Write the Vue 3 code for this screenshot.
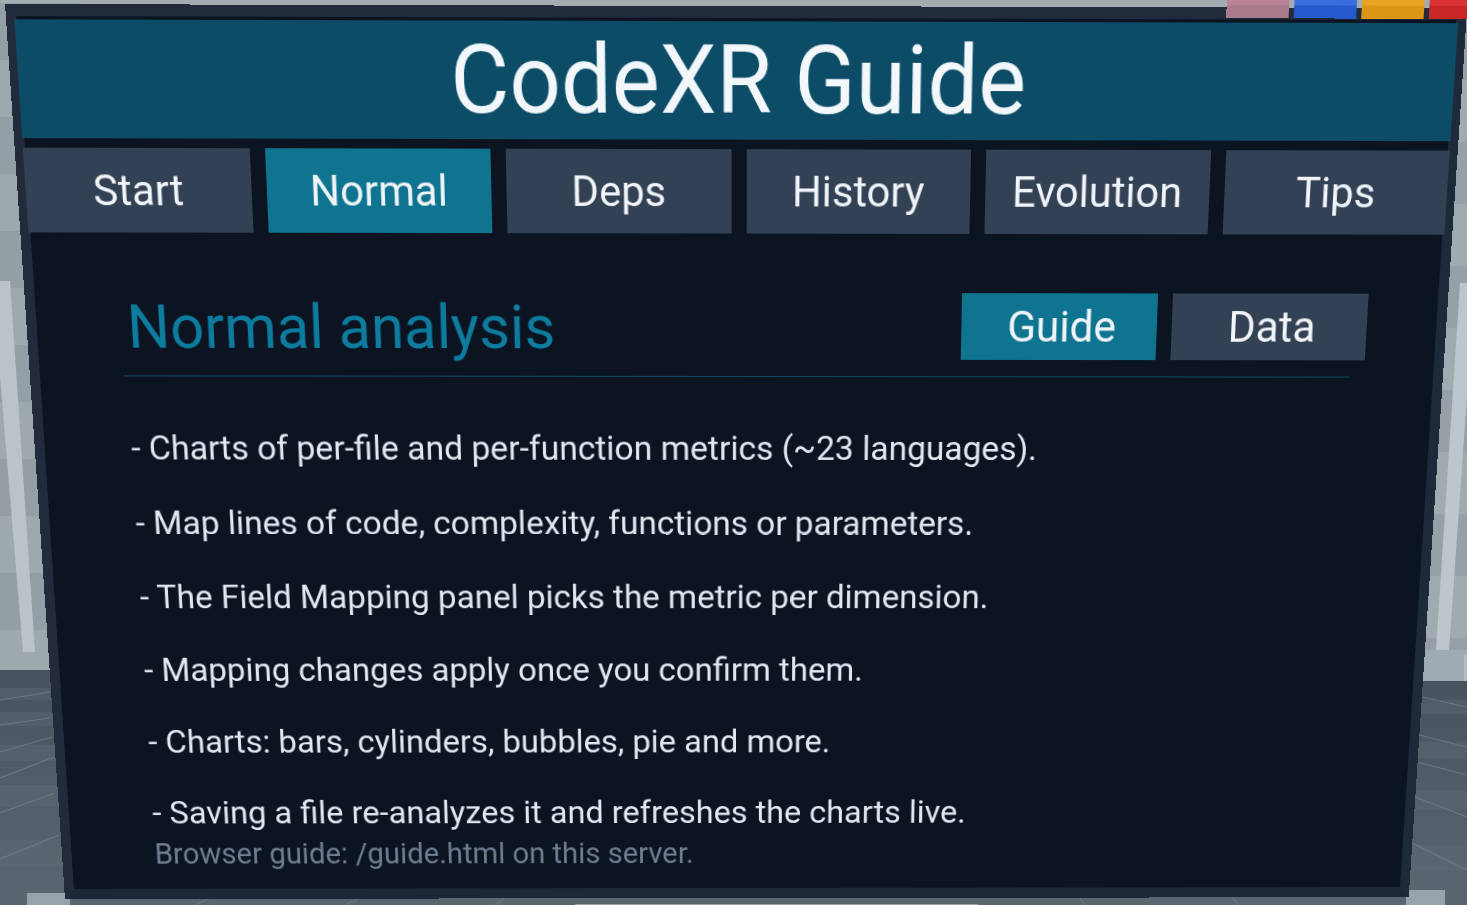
<script setup>
import { computed } from 'vue'

const W = 1420
const H = 890
const quad = [[5, 4], [1467, 8], [1408.5, 897], [65, 899]]

const panelStyle = computed(() => {
  const [[x0, y0], [x1, y1], [x2, y2], [x3, y3]] = quad
  const dx1 = x1 - x2, dx2 = x3 - x2, dx3 = x0 - x1 + x2 - x3
  const dy1 = y1 - y2, dy2 = y3 - y2, dy3 = y0 - y1 + y2 - y3
  const den = dx1 * dy2 - dx2 * dy1
  const g = (dx3 * dy2 - dx2 * dy3) / den
  const h = (dx1 * dy3 - dx3 * dy1) / den
  const a = x1 - x0 + g * x1, b = x3 - x0 + h * x3
  const d = y1 - y0 + g * y1, e = y3 - y0 + h * y3
  const m = [a / W, d / W, 0, g / W, b / H, e / H, 0, h / H, 0, 0, 1, 0, x0, y0, 0, 1]
  return { transform: `matrix3d(${m.join(',')})` }
})

const tabs = ['Start', 'Normal', 'Deps', 'History', 'Evolution', 'Tips']
const lines = [
  '- Charts of per-file and per-function metrics (~23 languages).',
  '- Map lines of code, complexity, functions or parameters.',
  '- The Field Mapping panel picks the metric per dimension.',
  '- Mapping changes apply once you confirm them.',
  '- Charts: bars, cylinders, bubbles, pie and more.',
  '- Saving a file re-analyzes it and refreshes the charts live.'
]
const swatches = ['pink', 'blue', 'amber', 'red']
const leftBands = Array.from({ length: 12 }, (_, i) => ({ y: 3 + i * 57, fill: i % 2 ? '#9ea9ae' : '#939fa5' }))
const rightBands = Array.from({ length: 11 }, (_, i) => ({ y: 18 + i * 62, fill: i % 2 ? '#a0abb0' : '#95a1a7' }))
const floorBands = [
  [0, 688, 80, 12], [0, 712, 80, 14], [0, 745, 80, 16], [0, 785, 80, 22], [0, 840, 80, 26],
  [1395, 700, 72, 14], [1395, 742, 72, 16], [1395, 790, 72, 20], [1395, 845, 72, 26]
]
const floorLines = [
  [0, 700, 50, 692], [0, 725, 50, 718], [0, 752, 52, 737], [0, 778, 54, 757], [0, 813, 55, 793], [0, 859, 59, 835],
  [1422, 697, 1467, 707], [1419, 735, 1467, 747], [1417, 762, 1467, 775], [1415, 797, 1467, 817], [1412, 843, 1467, 870],
  [195, 905, 210, 898], [345, 905, 360, 898], [495, 905, 505, 898], [1085, 905, 1080, 898], [1240, 905, 1232, 898]
]
</script>

<template>
  <div class="stage">
    <svg class="scene" viewBox="0 0 1467 905" width="1467" height="905" aria-hidden="true">
      <defs>
        <linearGradient id="floor" x1="0" y1="0" x2="0" y2="1">
          <stop offset="0" stop-color="#47535d" />
          <stop offset="1" stop-color="#5a6670" />
        </linearGradient>
      </defs>
      <rect x="0" y="0" width="1467" height="690" fill="#a3acb1" />
      <rect v-for="b in leftBands" :key="'l' + b.y" x="0" :y="b.y" width="80" height="57" :fill="b.fill" />
      <rect v-for="b in rightBands" :key="'r' + b.y" x="1397" :y="b.y" width="70" height="62" :fill="b.fill" />
      <rect x="1397" y="650" width="70" height="31" fill="#9fabb2" />
      <polygon points="-8,281 10,281 35,652 23,652" fill="#b9c3c9" />
      <polygon points="1460,283 1475,283 1449,650 1436,650" fill="#bcc6cc" />
      <rect x="1464" y="655" width="3" height="26" fill="#b4bec4" />
      <rect x="0" y="670" width="80" height="235" fill="url(#floor)" />
      <rect x="1395" y="681" width="72" height="224" fill="url(#floor)" />
      <rect
        v-for="(b, i) in floorBands"
        :key="'f' + i"
        :x="b[0]"
        :y="b[1]"
        :width="b[2]"
        :height="b[3]"
        fill="#626e78"
        opacity="0.35"
      />
      <rect x="0" y="896" width="1467" height="9" fill="#59656f" />
      <line
        v-for="(l, i) in floorLines"
        :key="i"
        :x1="l[0]"
        :y1="l[1]"
        :x2="l[2]"
        :y2="l[3]"
        stroke="#6a7680"
        stroke-width="1.2"
      />
      <rect x="575" y="904" width="403" height="1" fill="#98a4aa" />
      <polygon points="27,893 70,893 70,905 27,905" fill="#97a3aa" />
      <polygon points="1406,890 1445,890 1445,905 1406,905" fill="#97a3aa" />
    </svg>

    <div class="panel" :style="panelStyle">
      <div class="swatches">
        <span v-for="s in swatches" :key="s" class="swatch" :class="s"></span>
      </div>
      <header class="title">CodeXR Guide</header>
      <nav class="tabs">
        <div v-for="t in tabs" :key="t" class="tab" :class="{ active: t === 'Normal' }">{{ t }}</div>
      </nav>
      <main class="content">
        <div class="head">
          <h1 class="heading">Normal analysis</h1>
          <div class="toggle">
            <div class="btn active">Guide</div>
            <div class="btn">Data</div>
          </div>
        </div>
        <div class="lines">
          <p v-for="l in lines" :key="l" class="line">{{ l }}</p>
        </div>
        <p class="note">Browser guide: /guide.html on this server.</p>
      </main>
    </div>
  </div>
</template>

<style scoped>
.stage {
  position: relative;
  width: 1467px;
  height: 905px;
  overflow: hidden;
  font-family: Roboto, "Liberation Sans", sans-serif;
}
.scene {
  position: absolute;
  inset: 0;
  display: block;
}
.panel {
  position: absolute;
  left: 0;
  top: 0;
  width: 1420px;
  height: 890px;
  box-sizing: border-box;
  transform-origin: 0 0;
  background: #0c1422;
  border-style: solid;
  border-color: #222b3c #1c2a3a #1b2837 #222b3c;
  border-width: 11px 10px 11px 10px;
  display: flex;
  flex-direction: column;
}
.swatches {
  position: absolute;
  top: -35px;
  right: -34px;
  display: flex;
  gap: 5px;
}
.swatch {
  width: 61px;
  height: 34px;
}
.pink { background: linear-gradient(#bb8399 65%, #a87a8c 65%); }
.blue { background: linear-gradient(#3a6de0 65%, #2559cd 65%); }
.amber { background: linear-gradient(#e8a322 65%, #dd9614 65%); }
.red { background: linear-gradient(#d93333 65%, #c92626 65%); }
.title {
  margin: 3px -2px 0;
  height: 110px;
  background: #0c4c66;
  color: #f1f7fb;
  font-size: 88.3px;
  line-height: 110px;
  text-align: center;
}
.tabs {
  display: flex;
  gap: 15px;
  margin: 9px -2px 0;
}
.tab {
  flex: 1;
  height: 80px;
  line-height: 80px;
  background: #334155;
  color: #f1f5f9;
  font-size: 41.2px;
  text-align: center;
}
.tab.active, .btn.active {
  background: #0e7490;
}
.content {
  padding: 0 80px 0 87px;
  flex: 1;
  display: flex;
  flex-direction: column;
}
.head {
  display: flex;
  align-items: center;
  justify-content: space-between;
  height: 139px;
  box-sizing: border-box;
  padding: 48px 0 8px 6px;
  border-bottom: 1px solid #0e4a60;
  margin-left: -3px;
  margin-right: 5px;
}
.heading {
  margin: 4px 0 0;
  font-size: 59.5px;
  font-weight: 400;
  color: #0e7c9e;
}
.toggle {
  display: flex;
  gap: 15px;
  margin-right: -15px;
}
.btn {
  width: 196px;
  height: 65px;
  box-sizing: border-box;
  padding-left: 5px;
  line-height: 65px;
  background: #334155;
  color: #f1f5f9;
  font-size: 42.5px;
  text-align: center;
}
.lines {
  display: flex;
  flex-direction: column;
  gap: 35px;
  margin-top: 50px;
}
.line {
  margin: 0;
  color: #e2e8f0;
  font-size: 34px;
  line-height: 40px;
}
.note {
  margin: 7px 0 0;
  color: #6f7e93;
  font-size: 30.7px;
}
</style>

<style>
html, body { overflow: hidden; background: #8f9ba2; }
</style>
